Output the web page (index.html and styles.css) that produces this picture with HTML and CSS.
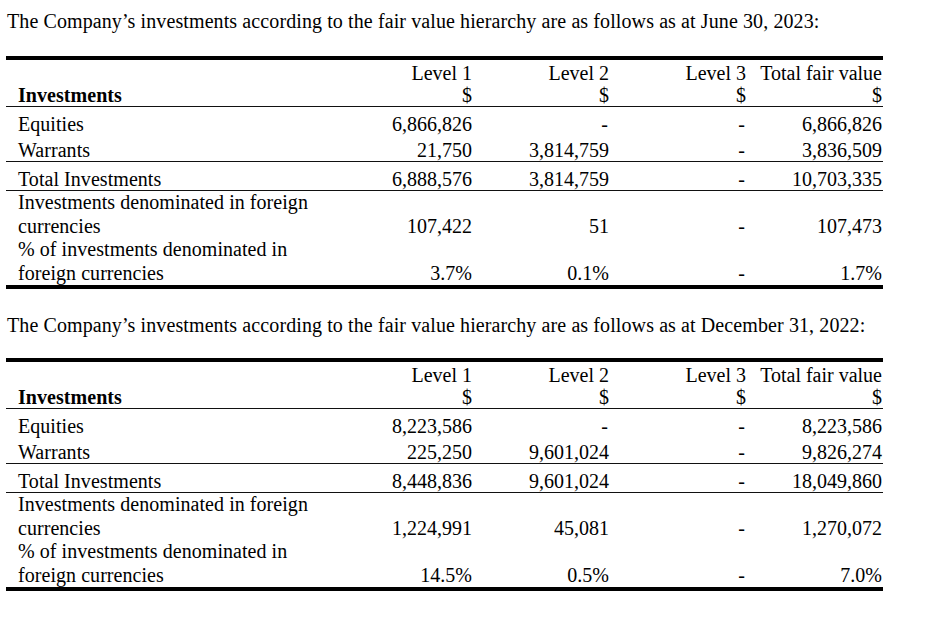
FILE: index.html
```html
<!DOCTYPE html>
<html lang="en">
<head>
<meta charset="utf-8">
<title>Fair value hierarchy</title>
<link rel="stylesheet" href="styles.css">
</head>
<body>
<div class="page">
  <p class="intro">The Company’s investments according to the fair value hierarchy are as follows as at June 30, 2023:</p>
  <table class="fv">
    <colgroup>
      <col class="c-label"><col class="c-l1"><col class="c-l2"><col class="c-l3"><col class="c-tot">
    </colgroup>
    <tr class="h1">
      <td class="label"></td><td class="num">Level 1</td><td class="num">Level 2</td><td class="num">Level 3</td><td class="num">Total fair value</td>
    </tr>
    <tr class="h2">
      <td class="label bold">Investments</td><td class="num">$</td><td class="num">$</td><td class="num">$</td><td class="num">$</td>
    </tr>
    <tr class="eq">
      <td class="label">Equities</td><td class="num">6,866,826</td><td class="num dash">-</td><td class="num dash3">-</td><td class="num">6,866,826</td>
    </tr>
    <tr class="wa">
      <td class="label">Warrants</td><td class="num">21,750</td><td class="num">3,814,759</td><td class="num dash3">-</td><td class="num">3,836,509</td>
    </tr>
    <tr class="tot">
      <td class="label">Total Investments</td><td class="num">6,888,576</td><td class="num">3,814,759</td><td class="num dash3">-</td><td class="num">10,703,335</td>
    </tr>
    <tr class="fx">
      <td class="label">Investments denominated in foreign<br>currencies</td><td class="num">107,422</td><td class="num">51</td><td class="num dash3">-</td><td class="num">107,473</td>
    </tr>
    <tr class="fx">
      <td class="label">% of investments denominated in<br>foreign currencies</td><td class="num">3.7%</td><td class="num">0.1%</td><td class="num dash3">-</td><td class="num">1.7%</td>
    </tr>
  </table>

  <p class="intro intro-2">The Company’s investments according to the fair value hierarchy are as follows as at December 31, 2022:</p>
  <table class="fv">
    <colgroup>
      <col class="c-label"><col class="c-l1"><col class="c-l2"><col class="c-l3"><col class="c-tot">
    </colgroup>
    <tr class="h1">
      <td class="label"></td><td class="num">Level 1</td><td class="num">Level 2</td><td class="num">Level 3</td><td class="num">Total fair value</td>
    </tr>
    <tr class="h2">
      <td class="label bold">Investments</td><td class="num">$</td><td class="num">$</td><td class="num">$</td><td class="num">$</td>
    </tr>
    <tr class="eq">
      <td class="label">Equities</td><td class="num">8,223,586</td><td class="num dash">-</td><td class="num dash3">-</td><td class="num">8,223,586</td>
    </tr>
    <tr class="wa">
      <td class="label">Warrants</td><td class="num">225,250</td><td class="num">9,601,024</td><td class="num dash3">-</td><td class="num">9,826,274</td>
    </tr>
    <tr class="tot">
      <td class="label">Total Investments</td><td class="num">8,448,836</td><td class="num">9,601,024</td><td class="num dash3">-</td><td class="num">18,049,860</td>
    </tr>
    <tr class="fx">
      <td class="label">Investments denominated in foreign<br>currencies</td><td class="num">1,224,991</td><td class="num">45,081</td><td class="num dash3">-</td><td class="num">1,270,072</td>
    </tr>
    <tr class="fx">
      <td class="label">% of investments denominated in<br>foreign currencies</td><td class="num">14.5%</td><td class="num">0.5%</td><td class="num dash3">-</td><td class="num">7.0%</td>
    </tr>
  </table>
</div>
</body>
</html>
```

FILE: styles.css
```css
html, body {
  margin: 0;
  padding: 0;
  background: #fff;
}
body {
  font-family: "Liberation Serif", "Times New Roman", serif;
  font-size: 20px;
  color: #000;
}
.page {
  padding-top: 10px;
}
.intro {
  margin: 0 0 24px 7px;
  line-height: 22px;
  letter-spacing: 0.1px;
  white-space: nowrap;
}
.intro-2 {
  margin-top: 25px;
  margin-bottom: 22px;
}
.fv {
  margin-left: 6px;
  width: 877px;
  border-collapse: collapse;
  table-layout: fixed;
  line-height: 22px;
  border-top: 4px solid #000;
  border-bottom: 4px solid #000;
}
.c-label { width: 316px; }
.c-l1 { width: 151px; }
.c-l2 { width: 137px; }
.c-l3 { width: 137px; }
.c-tot { width: 136px; }
.fv td {
  padding: 0;
  vertical-align: bottom;
  white-space: nowrap;
}
.fv .label {
  padding-left: 12px;
  text-align: left;
  letter-spacing: 0.05px;
}
.fv .num {
  text-align: right;
  padding-right: 1px;
}
.fv .dash { padding-right: 2px; }
.fv .dash3 { padding-right: 2px; }
.fv .bold { font-weight: bold; }
.fv .h1 td { padding-top: 2px; }
.fv .h2 td { border-bottom: 1px solid #111; }
.fv .eq td { padding-top: 6px; padding-bottom: 4px; }
.fv .wa td { padding-bottom: 0; border-bottom: 1px solid #111; }
.fv .tot td { padding-top: 6px; border-bottom: 1px solid #111; }
.fv .fx td { line-height: 23.5px; }
```
